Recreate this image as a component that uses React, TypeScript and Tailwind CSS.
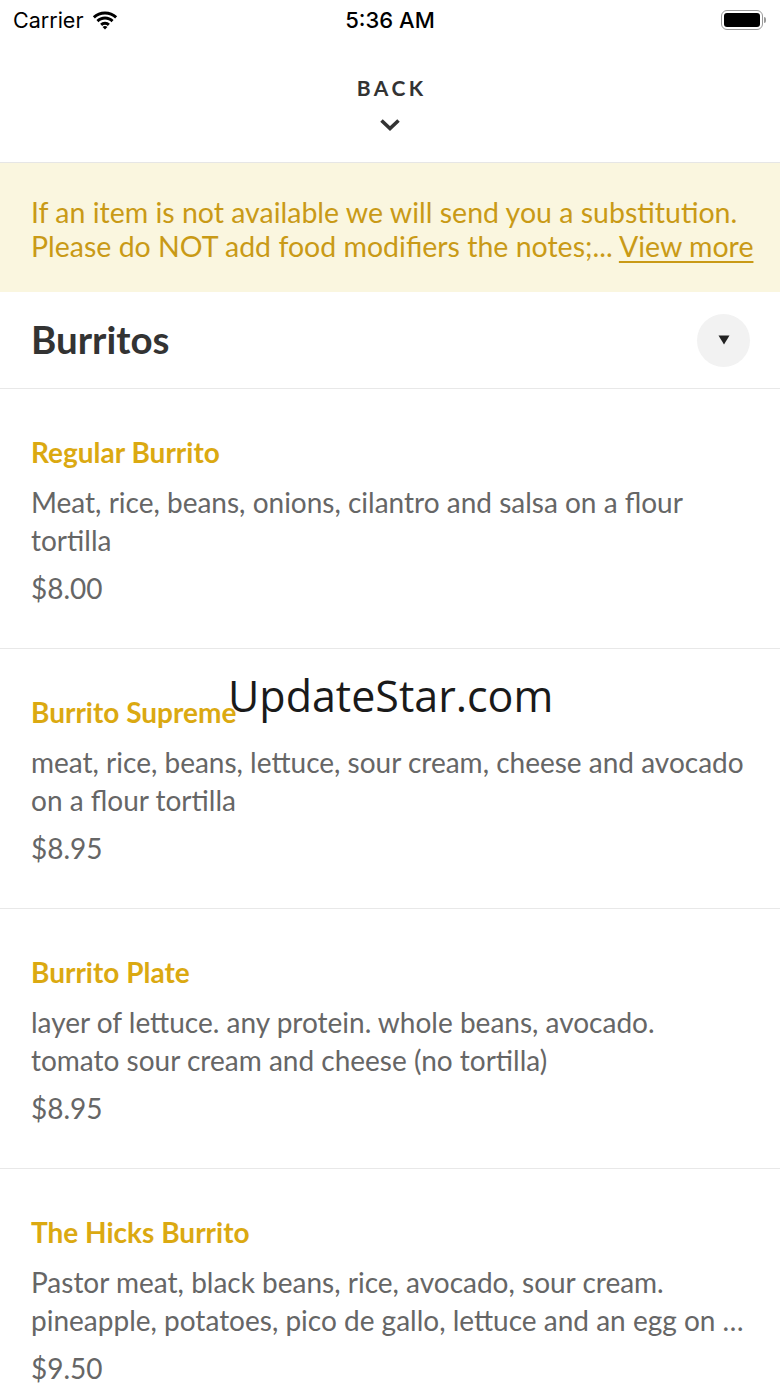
import React from "react";

const items = [
  {
    name: "Regular Burrito",
    desc: "Meat, rice, beans, onions, cilantro and salsa on a flour tortilla",
    price: "$8.00",
  },
  {
    name: "Burrito Supreme",
    desc: "meat, rice, beans, lettuce, sour cream, cheese and avocado on a flour tortilla",
    price: "$8.95",
  },
  {
    name: "Burrito Plate",
    desc: "layer of lettuce. any protein. whole beans, avocado. tomato sour cream and cheese (no tortilla)",
    price: "$8.95",
  },
  {
    name: "The Hicks Burrito",
    desc: "Pastor meat, black beans, rice, avocado, sour cream. pineapple, potatoes, pico de gallo, lettuce and an egg on a flour tortilla",
    price: "$9.50",
  },
];

export default function App() {
  return (
    <div className="relative w-[780px] h-[1387px] overflow-hidden bg-white font-['Lato',sans-serif]">
      {/* Status bar */}
      <div className="relative flex h-[40px] items-center justify-between px-[13px] font-['Inter',sans-serif] text-black">
        <div className="flex items-center gap-[9px] text-[21.5px]">
          <span>Carrier</span>
          <svg width="26" height="19" viewBox="0 0 24 18">
            <path d="M12 3.2c3.7 0 7.1 1.4 9.6 3.8l1.9-2C20.4 2 16.4.4 12 .4S3.6 2 .5 5l1.9 2C4.9 4.6 8.3 3.2 12 3.2z" fill="#000" />
            <path d="M12 8.1c2.4 0 4.6.9 6.2 2.5l1.9-2C18 6.5 15.1 5.3 12 5.3S6 6.5 3.9 8.6l1.9 2C7.4 9 9.6 8.1 12 8.1z" fill="#000" />
            <path d="M12 13c1.1 0 2 .4 2.7 1.1l1.9-2c-1.2-1.2-2.8-1.9-4.6-1.9s-3.4.7-4.6 1.9l1.9 2C10 13.4 10.9 13 12 13z" fill="#000" />
            <path d="M12 17.6l2.3-2.4c-.6-.6-1.4-.9-2.3-.9s-1.7.3-2.3.9z" fill="#000" />
          </svg>
        </div>
        <div className="absolute left-1/2 -translate-x-1/2 text-[22px] font-medium">5:36 AM</div>
        <div className="flex items-center pr-[1px]">
          <div className="flex h-[20px] w-[42px] items-center rounded-[6px] border-[1.5px] border-[#9a9a9a] p-[2px]">
            <div className="h-full w-full rounded-[3px] bg-black" />
          </div>
          <div className="ml-[1px] h-[6px] w-[2px] rounded-r-[2px] bg-[#9a9a9a]" />
        </div>
      </div>

      {/* Back header */}
      <div className="flex h-[123px] flex-col items-center border-b border-[#e6e6e6] pt-[34px]">
        <div className="text-[21px] font-bold leading-[28px] tracking-[3.5px] pl-[3.5px] text-[#333]">BACK</div>
        <svg className="mt-[16px]" width="22" height="14" viewBox="0 0 22 14">
          <path d="M2.5 2.5 L11 10.5 L19.5 2.5" fill="none" stroke="#333" strokeWidth="3.6" />
        </svg>
      </div>

      {/* Banner */}
      <div className="bg-[#faf6df] px-[31px] pt-[32px] pb-[29px] text-[28.5px] leading-[34px] text-[#c99a16]">
        <div className="whitespace-nowrap">If an item is not available we will send you a substitution.</div>
        <div className="whitespace-nowrap">
          Please do NOT add food modifiers the notes;... <span className="underline underline-offset-[4px] decoration-[2px]">View more</span>
        </div>
      </div>

      {/* Category header */}
      <div className="flex h-[97px] items-center justify-between border-b border-[#e8e8e8] pl-[31px] pr-[30px]">
        <div className="text-[38.5px] font-bold text-[#333]">Burritos</div>
        <div className="flex h-[53px] w-[53px] items-center justify-center rounded-full bg-[#f2f2f2]">
          <svg width="12" height="10" viewBox="0 0 12 10">
            <path d="M0.5 0.5 H11.5 L6 9.5 Z" fill="#222" />
          </svg>
        </div>
      </div>

      {/* Items */}
      {items.map((it) => (
        <div key={it.name} className="h-[260px] border-b border-[#e8e8e8] px-[31px] pt-[46px]">
          <div className="text-[28px] font-bold leading-[34px] text-[#dba911]">{it.name}</div>
          <div className="mt-[14px] line-clamp-2 text-[28px] leading-[38px] text-[#666]">{it.desc}</div>
          <div className="mt-[10px] text-[28px] leading-[38px] text-[#666]">{it.price}</div>
        </div>
      ))}

      {/* Watermark */}
      <div className="pointer-events-none absolute left-[228px] top-[668px] font-['Open_Sans',sans-serif] text-[43px] leading-[56px] text-[#1a1a1a]">
        UpdateStar.com
      </div>
    </div>
  );
}
